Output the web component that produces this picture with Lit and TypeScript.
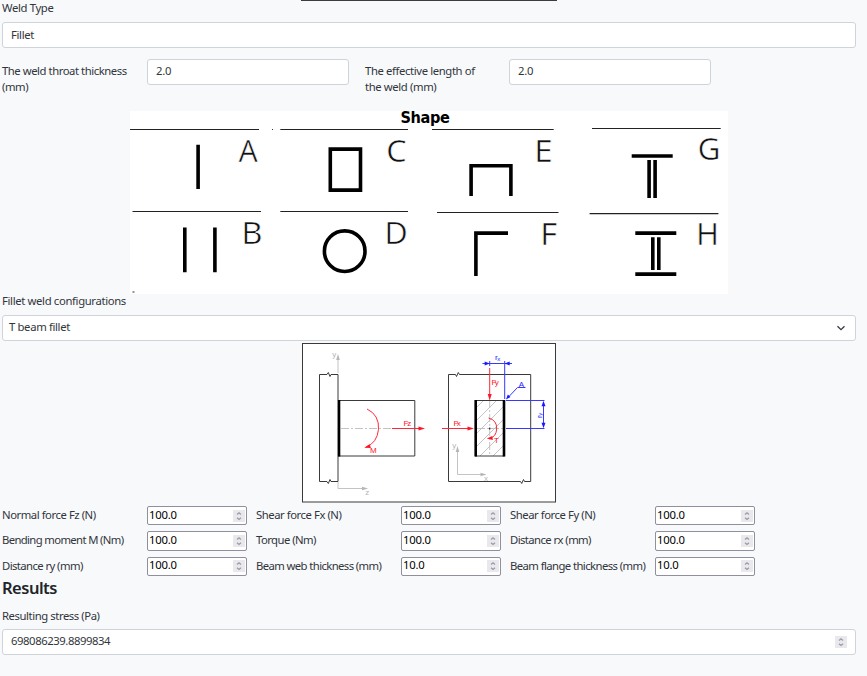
import { LitElement, html, svg, css } from "lit";
import { customElement, property } from "lit/decorators.js";
import { styleMap } from "lit/directives/style-map.js";

const spinner = html`<svg class="spin" width="12" height="12" viewBox="0 0 12 12">
  <rect width="12" height="12" fill="#e9e9ed" />
  <path d="M4 4.5 L6 2.8 L8 4.5 M4 7.7 L6 9.4 L8 7.7" fill="none" stroke="#9a9aa6" stroke-width="1.3" />
</svg>`;

@customElement("number-cell")
class NumberCell extends LitElement {
  @property() label = "";
  @property() value = "";
  @property({ type: Number }) tracking = 0;
  static styles = css`
    :host { display: grid; grid-template-columns: 145px 100px; height: 25.4px; align-items: start; }
    .label { white-space: nowrap; line-height: 16px; padding-top: 2px; }
    .field {
      box-sizing: border-box; height: 19.4px; margin-top: 1px; border: 1px solid #8f8f9d; border-radius: 2px; background: #fff;
      display: flex; align-items: center; justify-content: space-between; padding: 0 1px;
      color: #000; font-size: 11.3px; letter-spacing: -0.25px; line-height: 16px;
    }
    .value { margin-top: -2px; }
  `;
  render() {
    return html`<span class="label" style=${styleMap({ letterSpacing: `${this.tracking}px` })}>${this.label}</span>
      <div class="field"><span class="value">${this.value}</span>${spinner}</div>`;
  }
}

@customElement("shape-chart")
class ShapeChart extends LitElement {
  static styles = css`
    :host { display: block; height: 183px; }
    svg { display: block; overflow: visible; }
    .title { font: bold 15px "DejaVu Sans Condensed", "DejaVu Sans", sans-serif; fill: #000; }
    .letter { font: 30px "Noto Sans", sans-serif; fill: #111; stroke: #fff; stroke-width: 0.6; }
    .rule { stroke: #222; stroke-width: 1.2; }
    .weld { stroke: #000; stroke-width: 3.6; fill: none; }
  `;
  render() {
    const rules = [
      [130, 259, 129.5], [280.3, 408, 129.5], [432, 553.7, 129.5], [592, 720.7, 128.5],
      [132.5, 261, 211.5], [280.3, 408, 211.5], [437, 558.5, 212.5], [589.6, 718.4, 213.6],
    ];
    const letters: [string, number, number, number][] = [
      ["A", 238.6, 161.8, 19], ["C", 386, 161.8, 20.5], ["E", 534, 161.8, 18.5], ["G", 697.5, 159.6, 22.7],
      ["B", 241.3, 243.9, 21], ["D", 384.3, 243.9, 23.3], ["F", 540.1, 244.9, 17], ["H", 696, 244.9, 22.7],
    ];
    return html`<svg width="598" height="183" viewBox="130 111 598 183">
      <rect x="130" y="111" width="598" height="183" fill="#fff" />
      <text class="title" x="400.5" y="123" textLength="49" lengthAdjust="spacingAndGlyphs">Shape</text>
      ${rules.map(([a, b, y]) => svg`<path class="rule" d="M${a} ${y}H${b}" />`)}
      ${letters.map(([t, x, y, w]) => svg`<text class="letter" x=${x} y=${y} textLength=${w} lengthAdjust="spacingAndGlyphs">${t}</text>`)}
      <path d="M272 129.5h1M132.5 292h2" stroke="#333" stroke-width="1.2" />
      <path class="weld" d="M198.1 144.7V189M184.8 227.6V272.2M214.9 227.6V272.2M330.3 149.1H360.5V190.1H330.3Z
        M471.1 196V165.8H510.9V196M631.7 156H672.7M649.1 160V198M655.1 160V198
        M475.9 276V233.1H508M635.3 233.1H676.3M635.3 274.1H676.3M652.8 237.2V270M658.8 237.2V270" />
      <circle class="weld" cx="344.7" cy="251.2" r="20.3" />
    </svg>`;
  }
}

@customElement("beam-diagram")
class BeamDiagram extends LitElement {
  static styles = css`
    :host { display: block; height: 160px; }
    svg { display: block; }
    text { font-family: "Liberation Sans", sans-serif; font-size: 8px; }
    .line { stroke: #3a3a3a; stroke-width: 1; fill: none; }
    .grey { stroke: #bdbdbd; stroke-width: 0.9; fill: none; }
    .red { stroke: #ff2838; stroke-width: 1; fill: none; }
    .blue { stroke: #3838ff; stroke-width: 1; fill: none; }
    .grey-fill { fill: #b5b5b5; }
    .red-fill { fill: #ff1428; }
    .blue-fill { fill: #1a1aff; }
    .sub { font-size: 6px; }
  `;
  render() {
    return html`<svg width="254" height="160" viewBox="302 343 254 160">
      <defs>
        <clipPath id="section"><rect x="477" y="401" width="26" height="55" /></clipPath>
      </defs>
      <rect x="302.5" y="343.5" width="253" height="158.5" fill="#fff" stroke="#3a3a3a" />
      <path class="grey" d="M338 373V358M338 482V488.5H363M457.5 450V474.5H482" />
      <path class="grey-fill" d="M338 354l-1.8 6h3.6zM368 488.5l-6-1.8v3.6zM457.5 446l-1.8 6h3.6zM486.5 474.5l-6-1.8v3.6z" />
      <text class="grey-fill" x="332.3" y="357">y</text>
      <text class="grey-fill" x="365.3" y="495">z</text>
      <text class="grey-fill" x="452.3" y="448">y</text>
      <text class="grey-fill" x="484" y="480.5">x</text>

      <path class="line" d="M338 374.5H331L330 376.5L328.3 372.5L327 374.5H319.5V481.5H327L328.3 483.5L330 479.5L331 481.5H338V374.5M338 400.5H414.8V456H338" />
      <path d="M339.1 400V456.5" stroke="#000" stroke-width="2.4" />
      <path class="grey" d="M341 428.5H392" stroke-dasharray="8 2 2 2" />
      <path class="red" d="M392 428.5H419M367 409Q379.5 415 378.5 429.5Q377 443 366 447" />
      <path class="red-fill" d="M425 428.5l-6.5-2v4zM364.2 447.8l5.5-3.5 1.2 3.7z" />
      <text class="red-fill" x="403.5" y="425.5" textLength="7.5">Fz</text>
      <text class="red-fill" x="370" y="453" textLength="6.5">M</text>

      <path class="line" d="M448.5 374.5H455.5L456.5 376.5L458.3 372.5L459.5 374.5H530.7V481.5H524.5L523.5 479.5L521.7 483.5L520.5 481.5H448.5Z" />
      <g clip-path="url(#section)">
        <path class="grey" d="M470 414L490 394M470 427L503 394M470 440L510 400M470 453L510 413M470 466L510 426M480 469L510 439M492 470L510 452" />
        <path class="grey" d="M489.7 400V457M477 428.5H503" stroke-dasharray="8 2 2 2" />
      </g>
      <path class="line" d="M475 400.5H504.5M475 456H504.5" />
      <path d="M475.7 400V456.5M504 400V456.5" stroke="#000" stroke-width="2.6" />
      <circle cx="489.7" cy="428.5" r="0.9" fill="#333" />
      <path class="red" d="M489.7 368V395M442 428.5H468M488.5 418Q497 420 496.7 429Q496 437 490 438" />
      <path class="red-fill" d="M489.7 400.5l-2-6.5h4zM474 428.5l-6.5-2v4zM486.8 438.5l5.5-2.5 .5 4z" />
      <text class="red-fill" x="491.5" y="384.5" textLength="6.8">Fy</text>
      <text class="red-fill" x="453.5" y="425.5" textLength="7">Fx</text>
      <text class="red-fill" x="494" y="443">T</text>

      <path class="blue" d="M482.5 363.5H512M489.7 361V366M504.7 361V399M506 400.5H544.5M506 428.5H544.5M543.5 402V427M509 396.5L517.5 387.5H525.5" />
      <path class="blue-fill" d="M489.7 363.5l-5-1.9v3.8zM504.7 363.5l5-1.9v3.8zM543.5 400.8l-2 5.5h4zM543.5 428.3l-2-5.5h4zM506 399.5l1.8-5 2.7 2.5z" />
      <text class="blue-fill" x="518.8" y="386.5">A</text>
      <text class="blue-fill" x="495" y="360">r<tspan class="sub" dy="1">x</tspan></text>
      <text class="blue-fill" transform="translate(541.5 418) rotate(-90)">r<tspan class="sub" dy="0">y</tspan></text>
    </svg>`;
  }
}

@customElement("app-root")
class AppRoot extends LitElement {
  static styles = css`
    :host {
      display: flex; flex-direction: column; box-sizing: border-box; width: 867px; height: 676px;
      padding: 0 11px 0 2px; overflow: hidden; background: #f8f9fb; color: #31363b;
      font-family: "Noto Sans", "Open Sans", sans-serif; font-size: 11.3px; line-height: 16px; letter-spacing: -0.35px;
    }
    .edge { position: absolute; left: 301px; top: 0; width: 256px; height: 1px; background: #3c3c40; }
    .box {
      box-sizing: border-box; height: 26px; border: 1px solid #ced4da; border-radius: 3px; background: #fff;
      display: flex; align-items: center; justify-content: space-between; padding: 0 8px 1px 8px; flex: none;
    }
    .box.select { padding: 0 9px 2px 6px; }
    .type { margin-top: 6px; }
    .pair { display: grid; grid-template-columns: 145px 202px 16px 144px 202px; margin-top: 11px; height: 52px; letter-spacing: -0.45px; }
    .pair .label { padding-top: 4px; white-space: pre; }
    .pair .second { grid-column: 4; letter-spacing: -0.38px; }
    .pair .box { padding-bottom: 2px; letter-spacing: -0.2px; }
    .chart { margin-left: 128px; }
    .caption { height: 22px; line-height: 16px; margin-top: -1px; }
    .diagram { margin: 2px 0 0 300px; }
    .loads { display: grid; grid-template-columns: 254px 254px 254px; padding-top: 2px; }
    h2 { margin: 0; font-size: 16.5px; font-weight: 600; line-height: 22px; height: 28px; margin-top: -4px; color: #212529; letter-spacing: -0.5px; }
    .after { margin-top: 3px; height: 21px; letter-spacing: -0.43px; }
    .result > span { margin-top: -1px; letter-spacing: -0.43px; }
    .chevron { margin-top: 2px; }
  `;
  render() {
    const loads: [string, string, number][] = [
      ["Normal force Fz (N)", "100.0", -0.45], ["Shear force Fx (N)", "100.0", -0.45], ["Shear force Fy (N)", "100.0", -0.45],
      ["Bending moment M (Nm)", "100.0", -0.64], ["Torque (Nm)", "100.0", -0.55], ["Distance rx (mm)", "100.0", -0.58],
      ["Distance ry (mm)", "100.0", -0.58], ["Beam web thickness (mm)", "10.0", -0.6], ["Beam flange thickness (mm)", "10.0", -0.58],
    ];
    return html`
      <div class="edge"></div>
      <div>Weld Type</div>
      <div class="box type">Fillet</div>
      <div class="pair">
        <div class="label">The weld throat thickness
(mm)</div>
        <div class="box">2.0</div>
        <div class="label second">The effective length of
the weld (mm)</div>
        <div class="box">2.0</div>
      </div>
      <shape-chart class="chart"></shape-chart>
      <div class="caption">Fillet weld configurations</div>
      <div class="box select">T beam fillet
        <svg class="chevron" width="10" height="8" viewBox="0 0 10 8"><path d="M1.5 2.3L5 5.7L8.5 2.3" fill="none" stroke="#343a40" stroke-width="1.3" /></svg>
      </div>
      <beam-diagram class="diagram"></beam-diagram>
      <div class="loads">${loads.map(([l, v, t]) => html`<number-cell .label=${l} .value=${v} .tracking=${t}></number-cell>`)}</div>
      <h2>Results</h2>
      <div class="caption after">Resulting stress (Pa)</div>
      <div class="box result"><span>698086239.8899834</span>${spinner}</div>
    `;
  }
}
